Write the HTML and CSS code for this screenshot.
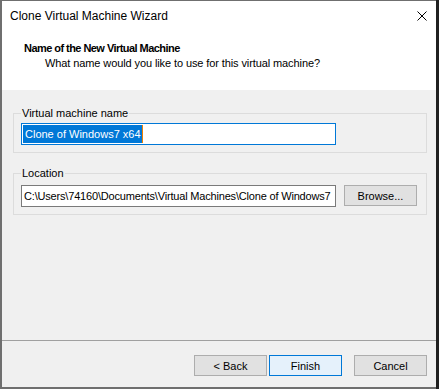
FILE: index.html
```html
<!DOCTYPE html>
<html lang="en">
<head>
    <meta charset="UTF-8">
    <title>Clone Virtual Machine Wizard</title>
    <link rel="stylesheet" href="styles.css">
</head>
<body>

    <div class="window">
        <div class="titlebar">
            <span class="title">Clone Virtual Machine Wizard</span>
            <svg class="close" width="10" height="10" viewBox="0 0 10 10">
                <path d="M0.5 0.5 L9.5 9.5 M9.5 0.5 L0.5 9.5" stroke="#000" stroke-width="1" fill="none"/>
            </svg>
        </div>

        <div class="header">
            <div class="header-title">Name of the New Virtual Machine</div>
            <div class="header-sub">What name would you like to use for this virtual machine?</div>
        </div>

        <div class="content">
            <fieldset class="group">
                <legend>Virtual machine name</legend>
                <div class="textbox focused"><span class="selected">Clone of Windows7 x64</span><span class="caret"></span></div>
            </fieldset>

            <fieldset class="group location">
                <legend>Location</legend>
                <div class="row">
                    <div class="textbox path">C:\Users\74160\Documents\Virtual Machines\Clone of Windows7</div>
                    <button class="btn">Browse...</button>
                </div>
            </fieldset>
        </div>

        <div class="footer">
            <button class="btn">&lt; Back</button>
            <button class="btn default">Finish</button>
            <button class="btn cancel">Cancel</button>
        </div>
    </div>
    <div class="desktop-edge"></div>

</body>
</html>
```

FILE: styles.css
```css
html, body {
    margin: 0;
    padding: 0;
}
body {
    font-family: "Liberation Sans", Arial, sans-serif;
    font-size: 11px;
    color: #000;
    background-color: #6f6f6f;
    display: flex;
    height: 389px;
    overflow: hidden;
}
.window {
    margin: 1px 0 0 2px;
    width: 434px;
    height: 386px;
    background-color: #f0f0f0;
    display: flex;
    flex-direction: column;
}
.desktop-edge {
    flex: 1;
    background-color: #202020;
}
.titlebar {
    height: 30px;
    background-color: #fff;
    display: flex;
    align-items: center;
    padding: 0 8px 0 8px;
}
.title {
    flex: 1;
    font-size: 12px;
}
.close {
    margin-right: 1px;
    margin-top: -1px;
}
.header {
    background-color: #fff;
    height: 49px;
    padding: 10px 0 0 22px;
    line-height: 15px;
}
.header-title {
    font-weight: bold;
    letter-spacing: -0.55px;
}
.header-sub {
    padding-left: 21px;
    letter-spacing: -0.1px;
}
.content {
    flex: 1;
    padding: 16px 9px 0 11px;
}
.group {
    margin: 0;
    border: 1px solid #dcdcdc;
    padding: 3px 8px 7px 7px;
}
.group legend {
    padding: 0 1px;
    line-height: 14px;
}
.group.location {
    margin-top: 13px;
    padding-top: 4px;
}
.row {
    display: flex;
    align-items: center;
    gap: 8px;
}
.textbox {
    width: 311px;
    height: 20px;
    border: 1px solid #7a7a7a;
    background-color: #fff;
    line-height: 20px;
    padding-left: 2px;
    white-space: nowrap;
    overflow: hidden;
    box-sizing: content-box;
    flex-shrink: 0;
}
.textbox.path {
    height: 20px;
    margin-top: 1px;
    letter-spacing: -0.18px;
}
.textbox.focused {
    border-color: #0078d7;
    padding-left: 0;
    width: 313px;
    display: flex;
    align-items: center;
}
.selected {
    margin-left: 1px;
    background-color: #0078d7;
    color: #fff;
    line-height: 18px;
    padding: 0 1px 0 2px;
}
.caret {
    width: 1px;
    height: 18px;
    background-color: #f08000;
}
.btn {
    font-family: "Liberation Sans", Arial, sans-serif;
    font-size: 11px;
    width: 73px;
    height: 21px;
    margin: 0;
    padding: 0;
    background-color: #e1e1e1;
    border: 1px solid #adadad;
    color: #000;
}
.btn.default {
    background-color: #e5f1fb;
    border-color: #0078d7;
}
.footer {
    box-sizing: border-box;
    border-top: 1px solid #a0a0a0;
    height: 47px;
    display: flex;
    justify-content: flex-end;
    align-items: flex-start;
    gap: 2px;
    padding: 14px 9px 0 0;
}
.btn.cancel {
    margin-left: 10px;
}
```
